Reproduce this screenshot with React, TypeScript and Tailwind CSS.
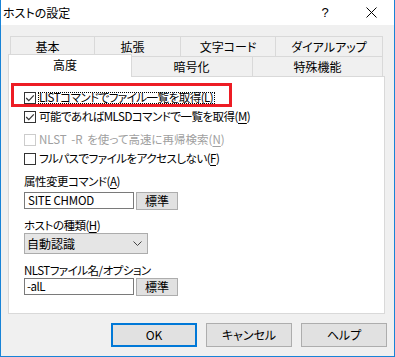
import React from "react";

const Check = ({ checked, disabled }: { checked?: boolean; disabled?: boolean }) => (
  <span
    className={
      disabled
        ? "w-[12px] h-[12px] border border-[#cccccc] bg-white flex items-center justify-center shrink-0"
        : "w-[12px] h-[12px] border border-[#333333] bg-white flex items-center justify-center shrink-0"
    }
  >
    {checked && (
      <svg width="10" height="10" viewBox="0 0 10 10">
        <path d="M1.2 5 L3.8 7.6 L8.8 2.4" stroke="#333333" strokeWidth="1.2" fill="none" />
      </svg>
    )}
  </span>
);

const U = ({ c }: { c: string }) => <span className="underline underline-offset-[2px]">{c}</span>;

const SmallBtn = () => (
  <div className="ml-[2px] w-[42px] h-[18px] bg-[#e1e1e1] border border-[#adadad] flex items-center justify-center text-[12px] tracking-normal">
    標準
  </div>
);

export default function App() {
  return (
    <div className="w-[395px] h-[357px] bg-[#f0f0f0] border-x border-b border-[#1883d7] flex flex-col relative overflow-hidden text-[12px] text-black font-['Noto_Sans_CJK_JP','Noto_Sans',sans-serif] [font-feature-settings:'palt']">
      {/* Title bar */}
      <div className="h-[25px] bg-white flex items-center shrink-0">
        <span className="pl-[2px] leading-none">ホストの設定</span>
        <div className="ml-auto flex h-full">
          <div className="w-[46px] flex items-center justify-center text-[13px] font-['Liberation_Sans',sans-serif]">?</div>
          <div className="w-[46px] flex items-center justify-center">
            <svg width="11" height="11" viewBox="0 0 11 11">
              <path d="M0.5 0.5 L10.5 10.5 M10.5 0.5 L0.5 10.5" stroke="#000" strokeWidth="1" fill="none" />
            </svg>
          </div>
        </div>
      </div>

      {/* Body */}
      <div className="flex flex-col pl-[7px] pt-[11px]">
        {/* Tab row 1 */}
        <div className="flex ml-[2px] h-[20px]">
          <div className="w-[84px] border-t border-l border-[#d9d9d9] flex items-center justify-center pr-[10px]">基本</div>
          <div className="w-[86px] border-t border-l border-[#d9d9d9] flex items-center justify-center pr-[10px]">拡張</div>
          <div className="w-[95px] border-t border-l border-[#d9d9d9] flex items-center justify-center">文字コード</div>
          <div className="w-[108px] border-t border-l border-r border-[#d9d9d9] flex items-center justify-center">ダイアルアップ</div>
        </div>
        {/* Tab row 2 */}
        <div className="flex ml-[2px] h-[20px]">
          <div className="relative z-10 -ml-[2px] -mt-[2px] w-[124px] h-[23px] bg-white border-t border-l border-r border-[#d9d9d9] flex items-center justify-center pb-[2px] pr-[10px]">
            高度
          </div>
          <div className="-ml-[2px] w-[122px] border-t border-l border-[#d9d9d9] flex items-center justify-center">暗号化</div>
          <div className="w-[131px] border-t border-l border-r border-[#d9d9d9] flex items-center justify-center">特殊機能</div>
        </div>

        {/* Panel */}
        <div className="relative w-[377px] h-[238px] bg-white border border-[#d9d9d9] pl-[15px] flex flex-col text-[11.5px] tracking-[-0.5px]">
          <div className="absolute left-[2px] top-[6px] w-[221px] h-[24px] border-[3px] border-[#ed1c24]" />

          <div className="mt-[11px] flex items-center h-[19px]">
            <Check checked />
            <span className="ml-[2px] inline-flex items-center h-[12px] border border-dotted border-black pr-[1px]">
              LISTコマンドでファイル一覧を取得(<U c="L" />)
            </span>
          </div>
          <div className="flex items-center h-[19px]">
            <Check checked />
            <span className="ml-[3px]">
              可能であればMLSDコマンドで一覧を取得(<U c="M" />)
            </span>
          </div>
          <div className="mt-[4px] flex items-center h-[19px] text-[#a0a0a0]">
            <Check disabled />
            <span className="ml-[3px] tracking-[0px] [word-spacing:2px]">
              NLST -R を使って高速に再帰検索(<U c="N" />)
            </span>
          </div>
          <div className="flex items-center h-[19px]">
            <Check />
            <span className="ml-[3px]">
              フルパスでファイルをアクセスしない(<U c="F" />)
            </span>
          </div>

          <div className="mt-[5px] leading-[16px]">
            属性変更コマンド(<U c="A" />)
          </div>
          <div className="mt-[3px] flex items-start">
            <div className="w-[110px] h-[17px] border border-[#7a7a7a] bg-white pl-[3px] flex items-center tracking-[-0.2px]">SITE CHMOD</div>
            <SmallBtn />
          </div>

          <div className="mt-[7px] leading-[16px]">
            ホストの種類(<U c="H" />)
          </div>
          <div className="w-[124px] h-[21px] bg-[#e5e5e5] border border-[#acacac] flex items-center pl-[2px] pr-[5px] text-[12px] tracking-normal">
            <span>自動認識</span>
            <svg className="ml-auto" width="9" height="5" viewBox="0 0 9 5">
              <path d="M0.5 0.5 L4.5 4.5 L8.5 0.5" stroke="#444444" strokeWidth="1" fill="none" />
            </svg>
          </div>

          <div className="mt-[8px] leading-[16px]">NLSTファイル名/オプション</div>
          <div className="flex items-start">
            <div className="w-[110px] h-[17px] border border-[#7a7a7a] bg-white pl-[2px] flex items-center">-alL</div>
            <SmallBtn />
          </div>
        </div>

        {/* Buttons */}
        <div className="mt-[9px] flex justify-end pr-[7px] gap-[9px]">
          <div className="w-[86px] h-[24px] bg-[#e1e1e1] border-2 border-[#0078d7] flex items-center justify-center">OK</div>
          <div className="w-[86px] h-[24px] bg-[#e1e1e1] border border-[#adadad] flex items-center justify-center">キャンセル</div>
          <div className="w-[86px] h-[24px] bg-[#e1e1e1] border border-[#adadad] flex items-center justify-center">ヘルプ</div>
        </div>
      </div>
    </div>
  );
}
